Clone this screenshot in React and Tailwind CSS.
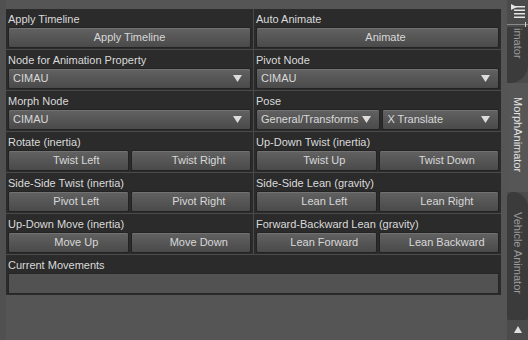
import React from "react";

const Arrow = () => (
  <svg width="9" height="7" viewBox="0 0 9 7" className="shrink-0">
    <path d="M0 0 H9 L4.5 7 Z" fill="#dcdcdc" />
  </svg>
);

const Btn = ({ children, shift }) => (
  <div
    className={`flex-1 h-full flex items-center justify-center border border-[#232323] rounded-[2px] bg-linear-to-b from-[#626262] to-[#4a4a4a] shadow-[inset_0_1px_0_#727272] text-[#d8d8d8] ${
      shift ? "pl-4" : ""
    }`}
  >
    {children}
  </div>
);

const Drop = ({ children, tight }) => (
  <div
    className={`flex-1 h-full flex items-center border border-[#232323] rounded-[2px] bg-linear-to-b from-[#626262] to-[#4a4a4a] shadow-[inset_0_1px_0_#727272] text-[#d8d8d8] pl-[4px] pr-[8px] ${
      tight ? "gap-[4px]" : "justify-between"
    }`}
  >
    <span>{children}</span>
    <Arrow />
  </div>
);

const Cell = ({ label, children, wide }) => (
  <div className={`bg-[#2b2b2b] h-[40px] px-[2px] pt-[2px] pb-[1px] flex flex-col ${wide ? "col-span-2 h-[39px]" : ""}`}>
    <div className="h-[16px] leading-[16px] text-[#dadada]">{label}</div>
    <div className="h-[21px] flex gap-[2px]">{children}</div>
  </div>
);

export default function App() {
  return (
    <div className="w-[528px] h-[340px] bg-[#555555] flex font-['Liberation_Sans',Arial,sans-serif] text-[11px] overflow-hidden">
      <div className="w-[6px] bg-[#505050]" />
      <div className="w-[495px] pt-[9px] bg-[#555555]">
        <div className="grid grid-cols-[247px_247px] gap-px bg-[#4a4a4a]">
          <Cell label="Apply Timeline">
            <Btn>Apply Timeline</Btn>
          </Cell>
          <Cell label="Auto Animate">
            <Btn shift>Animate</Btn>
          </Cell>
          <Cell label="Node for Animation Property">
            <Drop>CIMAU</Drop>
          </Cell>
          <Cell label="Pivot Node">
            <Drop>CIMAU</Drop>
          </Cell>
          <Cell label="Morph Node">
            <Drop>CIMAU</Drop>
          </Cell>
          <Cell label="Pose">
            <Drop tight>General/Transforms</Drop>
            <Drop>X Translate</Drop>
          </Cell>
          <Cell label="Rotate (inertia)">
            <Btn shift>Twist Left</Btn>
            <Btn shift>Twist Right</Btn>
          </Cell>
          <Cell label="Up-Down Twist (inertia)">
            <Btn shift>Twist Up</Btn>
            <Btn shift>Twist Down</Btn>
          </Cell>
          <Cell label="Side-Side Twist (inertia)">
            <Btn shift>Pivot Left</Btn>
            <Btn shift>Pivot Right</Btn>
          </Cell>
          <Cell label="Side-Side Lean (gravity)">
            <Btn shift>Lean Left</Btn>
            <Btn shift>Lean Right</Btn>
          </Cell>
          <Cell label="Up-Down Move (inertia)">
            <Btn shift>Move Up</Btn>
            <Btn shift>Move Down</Btn>
          </Cell>
          <Cell label="Forward-Backward Lean (gravity)">
            <Btn shift>Lean Forward</Btn>
            <Btn shift>Lean Backward</Btn>
          </Cell>
          <Cell label="Current Movements" wide>
            <div className="flex-1 h-full border border-[#262626] bg-[#525252]" />
          </Cell>
        </div>
      </div>
      <div className="flex-1 flex bg-[#555555]">
        <div className="w-[6px] bg-[#555555]" />
        <div className="flex-1 flex flex-col bg-[#4b4b4b]">
          <div className="h-[22px] flex items-start justify-center pt-[4px]">
            <svg width="15" height="14" viewBox="0 0 15 14">
              <path d="M1 0 L7 3 L1 6 Z" fill="#e6e6e6" />
              <rect x="4" y="2" width="11" height="1.5" fill="#e6e6e6" />
              <rect x="4" y="5.5" width="11" height="1.5" fill="#e6e6e6" />
              <rect x="4" y="9" width="11" height="1.5" fill="#e6e6e6" />
              <rect x="4" y="12.5" width="11" height="1.5" fill="#e6e6e6" />
            </svg>
          </div>
          <div className="h-[5px] flex items-center relative">
            <div className="w-full h-px bg-[#8a8a8a]" />
            <div className="absolute right-[2px] top-0 w-px h-[5px] bg-[#cfcfcf]" />
          </div>
          <div className="h-[56px] bg-[#3b3b3b] rounded-br-[18px] flex justify-center pt-[1px]">
            <span className="[writing-mode:vertical-rl] text-[#9c9c9c] leading-none whitespace-nowrap">imator</span>
          </div>
          <div className="h-[109px] bg-[#565656] flex justify-center pt-[14px]">
            <span className="[writing-mode:vertical-rl] text-[#e2e2e2] leading-none whitespace-nowrap">MorphAnimator</span>
          </div>
          <div className="h-[128px] bg-[#3b3b3b] rounded-tr-[16px] rounded-tl-[6px] rounded-b-[3px] flex justify-center pt-[20px]">
            <span className="[writing-mode:vertical-rl] text-[#9c9c9c] leading-none whitespace-nowrap">Vehicle Animator</span>
          </div>
          <div className="flex-1 flex justify-center pt-[6px]">
            <svg width="8" height="7" viewBox="0 0 8 7">
              <path d="M4 0 L8 7 H0 Z" fill="#e0e0e0" />
            </svg>
          </div>
        </div>
      </div>
    </div>
  );
}
